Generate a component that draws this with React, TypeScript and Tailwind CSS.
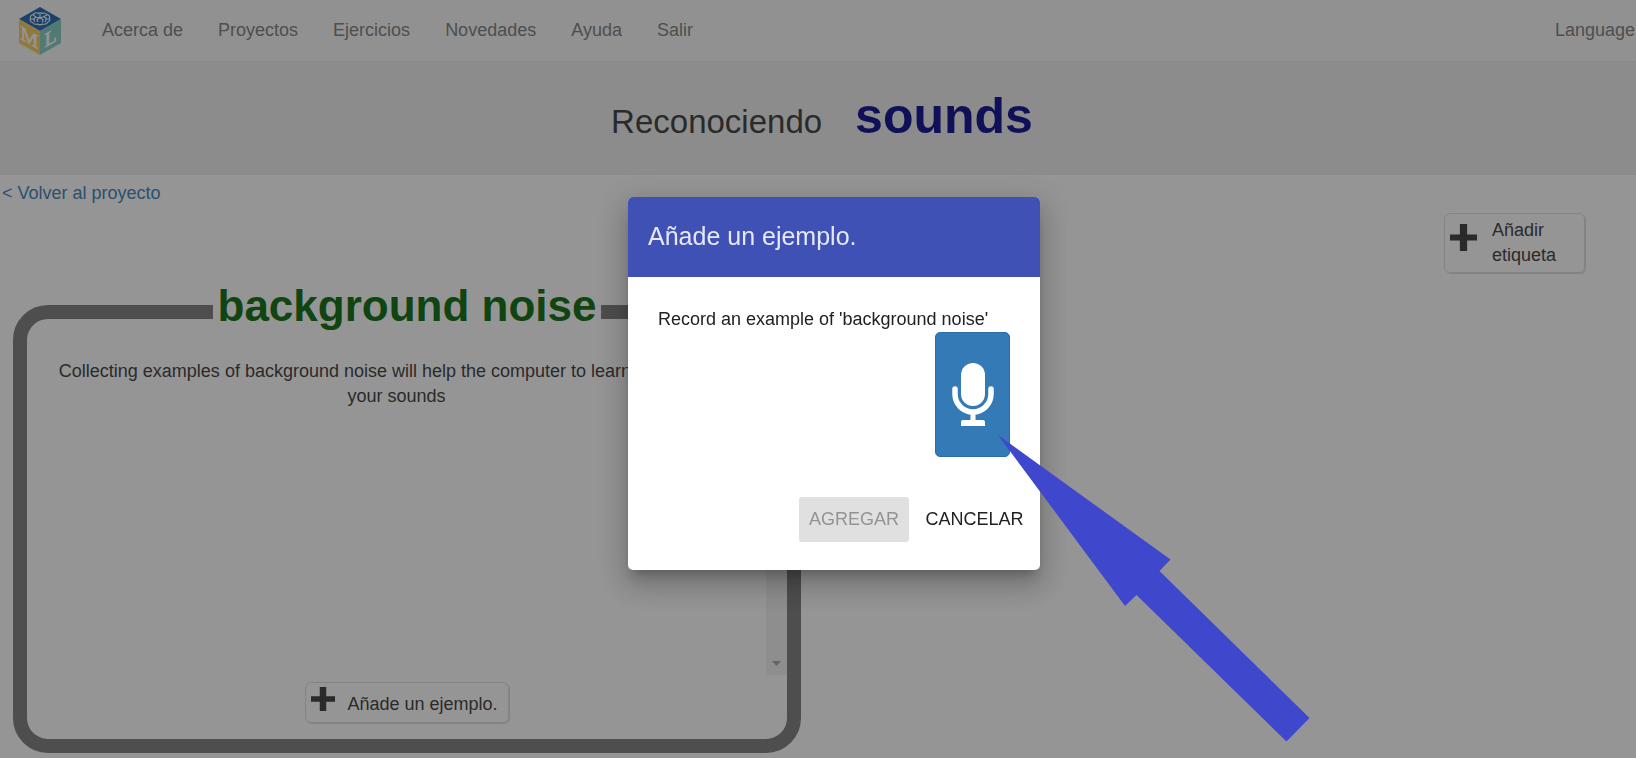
const navItems = ['Acerca de', 'Proyectos', 'Ejercicios', 'Novedades', 'Ayuda', 'Salir'];

function Logo() {
  return (
    <svg className="h-12 w-[42px]" viewBox="0 0 42 48" aria-hidden="true">
      <polygon points="21,0 42,12 21,24 0,12" fill="#1460ac" />
      <polygon points="0,12 21,24 21,48 0,36" fill="#f5c95a" />
      <polygon points="42,12 21,24 21,48 42,36" fill="#80cac2" />
      <g fill="none" stroke="#fff" strokeWidth="1.1">
        <path d="M14 7.500c1.500-1.500 4-2 5.500-1 1-.8 2.500-.8 3.500 0 1.500-.8 4-.3 5 1 2 .5 3 2 2.500 3.500 1 1.500 0 3.500-1.500 4-1 1.800-3.500 2.500-5.500 2-1.500 1-3.500 1-5 0-2 .6-4 0-5-1.500-2-.5-3-2.500-2-4-.8-1.800.5-3.500 2.500-4z" />
        <path d="M21 6.500v4.500l-3 1.500 1 2.500M21 11l3 1.500-.5 3M14 8l3 2-2.500 2.500M28 8l-3 1.500 2.500 2.500M11.500 12h3l1.500 3M30.500 12h-3l-1.500 3M17 10l4 1M25 9.500l-4 1.500" />
      </g>
      <g fill="#fff" stroke="#fff" strokeWidth="0.6" fontFamily="'Liberation Serif', serif" fontSize="20" textAnchor="middle">
        <text transform="matrix(1 0.570 0 1 10.500 30)" x="0" y="7">M</text>
        <text transform="matrix(1 -0.570 0 1 31.500 30)" x="0" y="7">L</text>
      </g>
    </svg>
  );
}

function Plus({ className }: { className: string }) {
  return (
    <svg className={className} viewBox="0 0 26 26" fill="currentColor" aria-hidden="true">
      <path d="M9.500 0h7v10h9.500v6h-9.500v10h-7V16H0v-6h9.500z" />
    </svg>
  );
}

function Microphone() {
  return (
    <svg className="h-16 w-[42px]" viewBox="0 0 42 64" aria-hidden="true">
      <rect x="9" y="0" width="24" height="43" rx="12" fill="#fff" />
      <path d="M3 26v5a18 18 0 0 0 36 0v-5" fill="none" stroke="#fff" strokeWidth="5.500" strokeLinecap="round" />
      <path d="M18.500 50h5v7h7.500a2 2 0 0 1 2 2v4H9v-4a2 2 0 0 1 2-2h7.500z" fill="#fff" />
    </svg>
  );
}

export default function App() {
  return (
    <div className="relative min-h-screen overflow-hidden bg-white font-['Liberation_Sans',Arial,sans-serif] text-[18px] leading-[25px] text-[#333]">
      <header className="flex h-[62px] items-center justify-between border-b border-[#e7e7e7] bg-[#f8f8f8] pr-px pl-[19px] text-[#777]">
        <div className="flex items-center gap-[41px]">
          <a href="#inicio" aria-label="Inicio"><Logo /></a>
          <nav className="flex gap-[35px]">
            {navItems.map((item) => (
              <a key={item} href="#nav">{item}</a>
            ))}
          </nav>
        </div>
        <button type="button">Language</button>
      </header>

      <h1 className="flex h-[113px] items-baseline justify-center gap-[33px] bg-[#eee] pt-6 pl-2 text-[33px] leading-[60px]">
        <span>Reconociendo</span>
        <strong className="text-[50px] text-[#00008b]">sounds</strong>
      </h1>

      <main>
        <div className="flex items-start justify-between pt-1.5 pr-[51px] pl-0.5">
          <a href="#proyecto" className="text-[#337ab7]">&lt; Volver al proyecto</a>
          <button type="button" className="mt-8 flex w-[141px] items-start gap-[15px] rounded-md border border-[#ddd] px-[5px] py-1 text-left shadow-[1px_1px_0_#ddd]">
            <Plus className="mt-1.5 size-[27px] shrink-0" />
            <span>Añadir etiqueta</span>
          </button>
        </div>

        <div className="grid grid-cols-2">
          <fieldset className="mt-2 mr-[17px] ml-[13px] rounded-[35px] border-[14px] border-[#777]">
            <legend className="mx-auto px-[5px] pb-3 text-[44px] leading-[50px] font-bold text-[#006400]">background noise</legend>
            <div className="flex h-[332px]">
              <p className="flex-1 px-5 pt-4 text-center">
                Collecting examples of background noise will help the computer to learn to recognise your sounds
              </p>
              <div className="flex w-[21px] items-end justify-center bg-[#f1f1f1] pb-[9px]">
                <svg className="h-[5px] w-[9px]" viewBox="0 0 9 5" fill="#a3a3a3" aria-hidden="true">
                  <path d="M0 0h9L4.500 5z" />
                </svg>
              </div>
            </div>
            <div className="flex justify-center pt-[7px] pb-4">
              <button type="button" className="flex h-[41px] items-start gap-3 rounded-md border border-[#ddd] pr-[10px] pl-[5px] shadow-[1px_1px_0_#ddd]">
                <Plus className="mt-1 size-6" />
                <span className="mt-[9px]">Añade un ejemplo.</span>
              </button>
            </div>
          </fieldset>
        </div>
      </main>

      <div className="fixed inset-0 flex items-center justify-center bg-[#212121]/48 pt-[9px] pl-8">
        <div
          role="dialog"
          aria-modal="true"
          aria-labelledby="dialog-title"
          className="w-[412px] overflow-hidden rounded-[5px] bg-white text-[#212121] shadow-[0_9px_10px_-5px_rgba(0,0,0,0.2),0_16px_24px_3px_rgba(0,0,0,0.14),0_6px_30px_5px_rgba(0,0,0,0.12)]"
        >
          <h2 id="dialog-title" className="flex h-20 items-center bg-[#3f51b5] px-5 pb-0.5 text-[25px] text-white/87">Añade un ejemplo.</h2>
          <div className="flex flex-col items-end px-[30px] pt-[30px]">
            <p className="w-full whitespace-nowrap">Record an example of 'background noise'</p>
            <button type="button" aria-label="Grabar" className="flex h-[125px] w-[75px] items-center justify-center rounded-[5px] border border-[#2e6da4] bg-[#337ab7]">
              <Microphone />
            </button>
          </div>
          <div className="flex justify-end gap-2 pt-10 pr-2 pb-7">
            <button type="button" disabled className="h-[45px] w-[110px] rounded-[3px] bg-[#e0e0e0] text-[#939393]">AGREGAR</button>
            <button type="button" className="h-[45px] w-[115px] rounded-[3px]">CANCELAR</button>
          </div>
        </div>
      </div>

      <svg className="pointer-events-none absolute top-[435px] left-[998px] h-[307px] w-[312px]" viewBox="0 0 312 307" aria-hidden="true">
        <polygon points="0,0 172.500,124.500 161.500,136 311.500,283 288.500,306.500 138.500,160 127,171" fill="#3f48cc" />
      </svg>
    </div>
  );
}
